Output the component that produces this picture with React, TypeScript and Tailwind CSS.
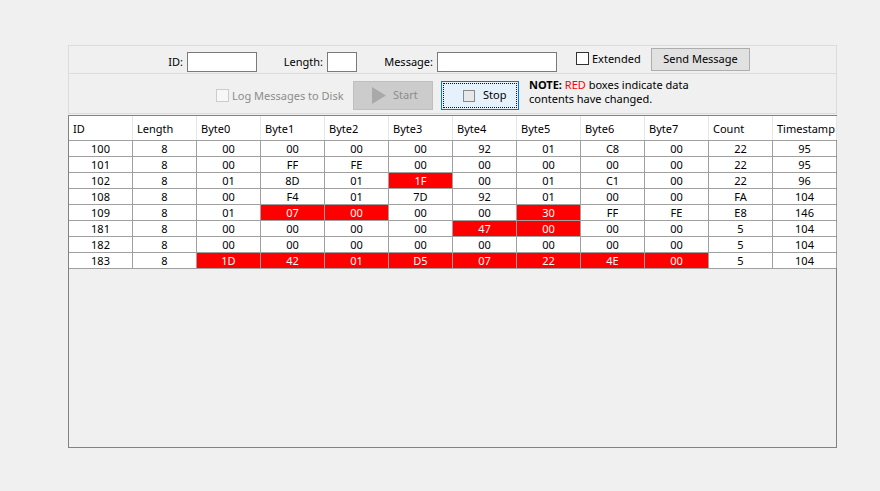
const columns = ['ID', 'Length', 'Byte0', 'Byte1', 'Byte2', 'Byte3', 'Byte4', 'Byte5', 'Byte6', 'Byte7', 'Count', 'Timestamp'];

// a "*" prefix marks a cell whose data changed (red box)
const rows: string[][] = [
  ['100', '8', '00', '00', '00', '00', '92', '01', 'C8', '00', '22', '95'],
  ['101', '8', '00', 'FF', 'FE', '00', '00', '00', '00', '00', '22', '95'],
  ['102', '8', '01', '8D', '01', '*1F', '00', '01', 'C1', '00', '22', '96'],
  ['108', '8', '00', 'F4', '01', '7D', '92', '01', '00', '00', 'FA', '104'],
  ['109', '8', '01', '*07', '*00', '00', '00', '*30', 'FF', 'FE', 'E8', '146'],
  ['181', '8', '00', '00', '00', '00', '*47', '*00', '00', '00', '5', '104'],
  ['182', '8', '00', '00', '00', '00', '00', '00', '00', '00', '5', '104'],
  ['183', '8', '*1D', '*42', '*01', '*D5', '*07', '*22', '*4E', '*00', '5', '104'],
];

const Label = ({ text, width }: { text: string; width: string }) => (
  <span className={`${width} mt-[6px] h-[20px] leading-[20px] text-right pr-[4px] whitespace-nowrap`}>{text}</span>
);

const TextBox = ({ width }: { width: string }) => (
  <div className={`${width} mt-[6px] h-[20px] bg-white border border-[#7a7a7a]`} />
);

export default function App() {
  return (
    <div
      className="min-h-screen w-full bg-[#f0f0f0] text-black text-[11px] pt-[45px] pl-[68px]"
      style={{ fontFamily: '"Noto Sans", "Open Sans", Arial, sans-serif' }}
    >
      <div className="w-[769px]">
        {/* Send row */}
        <div className="h-[29px] border border-[#dcdcdc] flex items-start">
          <Label text="ID:" width="w-[118px]" />
          <TextBox width="w-[70px]" />
          <Label text="Length:" width="w-[70px]" />
          <TextBox width="w-[30px]" />
          <Label text="Message:" width="w-[80px]" />
          <TextBox width="w-[120px]" />
          <div className="ml-[19px] mt-[6px] w-[13px] h-[13px] border border-[#333] bg-white" />
          <span className="ml-[3px] w-[59px] mt-[4px] h-[18px] leading-[18px] whitespace-nowrap">Extended</span>
          <div className="mt-[2px] w-[99px] h-[23px] bg-[#e1e1e1] border border-[#adadad] flex items-center justify-center">
            Send Message
          </div>
        </div>

        {/* Control row */}
        <div className="h-[40px] border border-t-0 border-[#dcdcdc] flex items-start">
          <div className="ml-[147px] mt-[15px] w-[13px] h-[13px] border border-[#cccccc] bg-[#f7f7f7]" />
          <span className="ml-[3px] w-[121px] mt-[14px] h-[16px] leading-[16px] text-[#8c8c8c] whitespace-nowrap">
            Log Messages to Disk
          </span>
          <div className="mt-[7px] w-[80px] h-[29px] bg-[#cccccc] border border-[#bfbfbf] flex items-center">
            <svg width="14" height="17" viewBox="0 0 14 17" className="ml-[18px]">
              <path d="M0 0 L14 8.5 L0 17 Z" fill="#a9a9a9" />
            </svg>
            <span className="ml-[7px] text-[#8c8c8c]">Start</span>
          </div>
          <div className="ml-[8px] mt-[7px] w-[78px] h-[29px] bg-[#e5f1fb] border border-[#0078d7] p-[1px]">
            <div className="w-full h-full border border-dotted border-[#111] flex items-center">
              <div className="ml-[19px] w-[12px] h-[12px] border border-[#8a8a8a] bg-[#e8e8e8]" />
              <span className="ml-[8px]">Stop</span>
            </div>
          </div>
          <div className="ml-[10px] mt-[4px] leading-[14px] whitespace-nowrap">
            <div>
              <span className="font-bold">NOTE:</span> <span className="text-[#ff0000]">RED</span> boxes indicate data
            </div>
            <div>contents have changed.</div>
          </div>
        </div>

        {/* Message table */}
        <div className="mt-[1px] h-[333px] border border-[#828282] bg-[#f0f0f0]">
          <div className="grid grid-cols-[repeat(12,64px)] h-[25px] bg-white border-b border-[#a0a0a0]">
            {columns.map((c) => (
              <div key={c} className="border-r border-[#e5e5e5] pl-[4px] leading-[26px] whitespace-nowrap overflow-hidden">
                {c}
              </div>
            ))}
          </div>
          {rows.map((r, i) => (
            <div key={i} className="grid grid-cols-[repeat(12,64px)] h-[16px] bg-white border-b border-[#a0a0a0]">
              {r.map((v, j) => {
                const changed = v.startsWith('*');
                return (
                  <div
                    key={j}
                    className={`border-r border-[#a0a0a0] text-center leading-[15px] ${changed ? 'bg-[#ff0000] text-white' : ''}`}
                  >
                    {changed ? v.slice(1) : v}
                  </div>
                );
              })}
            </div>
          ))}
        </div>
      </div>
    </div>
  );
}
